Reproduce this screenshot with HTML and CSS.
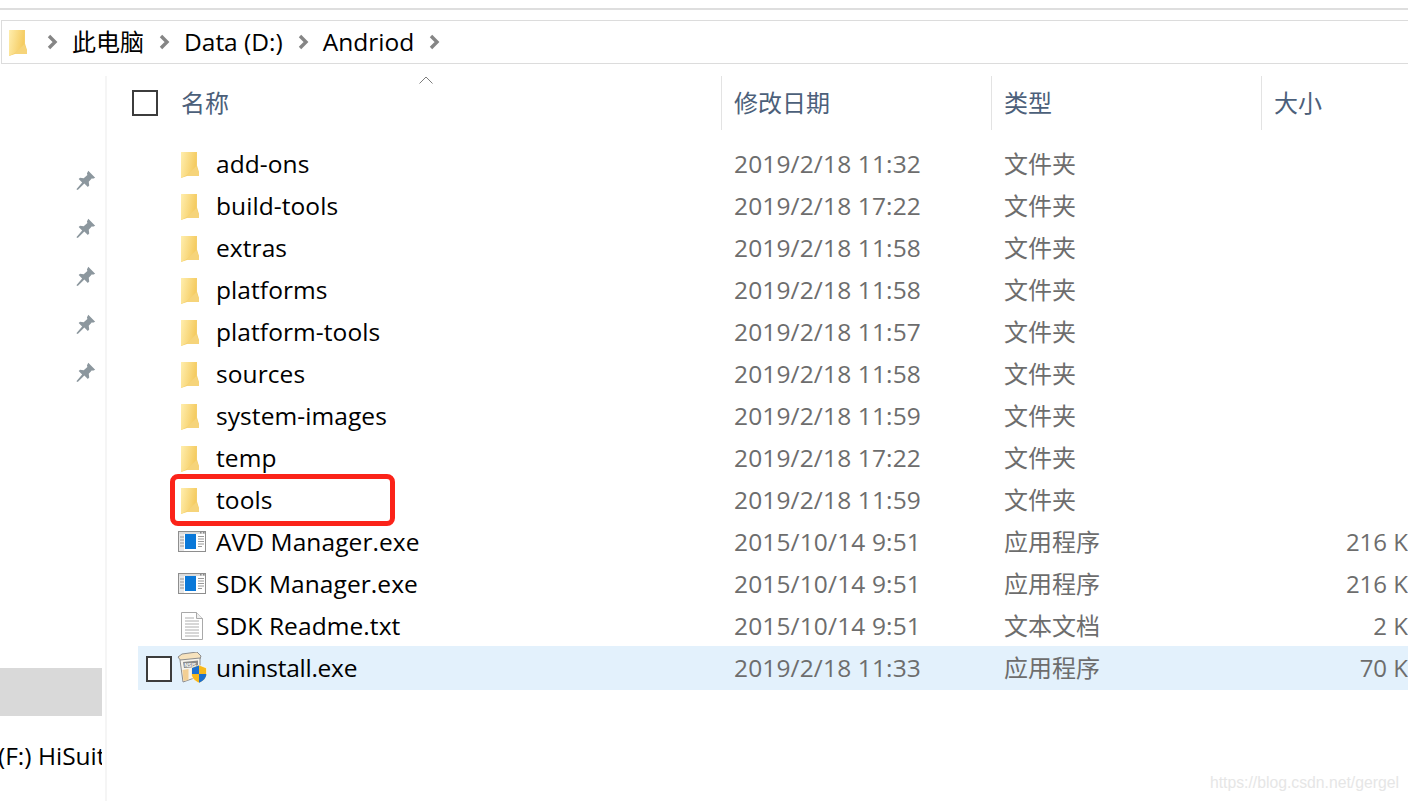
FILE: index.html
```html
<!DOCTYPE html>
<html lang="zh">
<head>
<meta charset="utf-8">
<title>Andriod</title>
<link rel="stylesheet" href="styles.css">
</head>
<body>
<svg class="defs" width="0" height="0" aria-hidden="true">
  <defs>
    <linearGradient id="fg" x1="0" x2="1" y1="0" y2="0.3">
      <stop offset="0" stop-color="#ffeeae"/><stop offset="1" stop-color="#f5cc62"/>
    </linearGradient>
    <symbol id="folder" viewBox="0 0 18 28" preserveAspectRatio="none">
      <path d="M0 1h16v14l2 7v4H6l-6 2z" fill="#f4cf6c"/>
      <path d="M0 1h15v15l-9 9-6 3z" fill="url(#fg)"/>
      <path d="M6 25l9-9 3 6v4H6z" fill="#f6d47a"/>
    </symbol>
    <symbol id="chev" viewBox="0 0 12 16">
      <path d="M3 2l6 6-6 6" fill="none" stroke="#858585" stroke-width="3.4"/>
    </symbol>
    <symbol id="pin" viewBox="0 0 24 24">
      <path d="M14.500 2l7.500 7.500-2.500 1-1-.5-3.500 4 .5 4-1.500 1.500-3.800-3.800L3 23l-1.500-1 6.300-7.300L4 11l1.500-1.500 4 .5 4-3.500-.5-1.500z" fill="#8c979e"/>
    </symbol>
    <symbol id="app" viewBox="0 0 28 21">
      <rect x=".5" y=".5" width="27" height="20" fill="#e8e8e8" stroke="#8e8e8e"/>
      <rect x="1" y="1" width="26" height="2" fill="#dcdcdc"/>
      <rect x="22" y="1" width="1.500" height="1.500" fill="#888"/><rect x="25" y="1" width="1.500" height="1.500" fill="#888"/>
      <rect x="6" y="3" width="21" height="17" fill="#fff"/>
      <rect x="7" y="3" width="11" height="15" fill="#0a78d8"/>
      <path d="M2 6h4M2 9h4M2 12h4M2 15h4M20 5.500h6M20 8h6M20 10.500h6M20 13h6M20 15.500h4" stroke="#9a9a9a"/>
    </symbol>
    <symbol id="doc" viewBox="0 0 22 28">
      <path d="M.5.500h15l6 6v21H.500z" fill="#fff" stroke="#a9a9a9"/>
      <path d="M15.500.500v6h6" fill="#eee" stroke="#a9a9a9"/>
      <path d="M4 6h9M4 9h14M4 12h14M4 15h14M4 18h14M4 21h14M4 24h14" stroke="#aeaeae"/>
    </symbol>
    <symbol id="nsis" viewBox="0 0 30 31">
      <path d="M1 5l4-3 15-2 4 4-1 3L4 9z" fill="#f6e2bd" stroke="#8d8d8d"/>
      <path d="M3 8l20-2v18L6 30z" fill="#f6f3ec" stroke="#8d8d8d"/>
      <path d="M6 10l15-1.500v6.500L7 16z" fill="#8b8b8b"/>
      <text x="7.500" y="14.500" class="nsis-label">NSIS</text>
      <path d="M5.500 18l6-1v11l-5 1z" fill="#f3cf94"/>
      <path d="M22 13l7.500 3v6c0 4-3 7-7.500 9-4.500-2-7.500-5-7.500-9v-6z" fill="#f6b81c" stroke="#fff" stroke-width=".6"/>
      <path d="M22 13.500v8.500h-7v-6zM22 22h7.300c0 4-3 7-7.300 8.700z" fill="#1a6fd0"/>
    </symbol>
  </defs>
</svg>

<div class="page">
  <div class="topline"></div>
  <nav class="address">
    <svg class="addr-folder"><use href="#folder"/></svg>
    <svg class="chev first"><use href="#chev"/></svg>
    <span class="crumb crumb-cn">此电脑</span>
    <svg class="chev"><use href="#chev"/></svg>
    <span class="crumb">Data (D:)</span>
    <svg class="chev"><use href="#chev"/></svg>
    <span class="crumb">Andriod</span>
    <svg class="chev"><use href="#chev"/></svg>
  </nav>

  <div class="body">
    <aside class="side">
      <div class="pins">
        <svg class="pin"><use href="#pin"/></svg>
        <svg class="pin"><use href="#pin"/></svg>
        <svg class="pin"><use href="#pin"/></svg>
        <svg class="pin"><use href="#pin"/></svg>
        <svg class="pin"><use href="#pin"/></svg>
      </div>
      <div class="side-active"></div>
      <div class="side-drive">(F:) HiSuite</div>
    </aside>

    <main class="main">
      <div class="header">
        <div class="h-name">
          <span class="check"></span>
          <span class="h-label">名称</span>
          <svg class="sort" viewBox="0 0 14 8"><path d="M.5 7.500L7 1l6.500 6.500" fill="none" stroke="#7d7d7d"/></svg>
        </div>
        <div class="h-col"><span class="h-label-col">修改日期</span></div>
        <div class="h-col"><span class="h-label-col">类型</span></div>
        <div class="h-col"><span class="h-label-col">大小</span></div>
      </div>

      <div class="rows">
        <div class="row"><div class="c-name"><svg class="ic-folder"><use href="#folder"/></svg><span class="name">add-ons</span></div><div class="c-date">2019/2/18 11:32</div><div class="c-type">文件夹</div><div class="c-size"></div></div>
        <div class="row"><div class="c-name"><svg class="ic-folder"><use href="#folder"/></svg><span class="name">build-tools</span></div><div class="c-date">2019/2/18 17:22</div><div class="c-type">文件夹</div><div class="c-size"></div></div>
        <div class="row"><div class="c-name"><svg class="ic-folder"><use href="#folder"/></svg><span class="name">extras</span></div><div class="c-date">2019/2/18 11:58</div><div class="c-type">文件夹</div><div class="c-size"></div></div>
        <div class="row"><div class="c-name"><svg class="ic-folder"><use href="#folder"/></svg><span class="name">platforms</span></div><div class="c-date">2019/2/18 11:58</div><div class="c-type">文件夹</div><div class="c-size"></div></div>
        <div class="row"><div class="c-name"><svg class="ic-folder"><use href="#folder"/></svg><span class="name">platform-tools</span></div><div class="c-date">2019/2/18 11:57</div><div class="c-type">文件夹</div><div class="c-size"></div></div>
        <div class="row"><div class="c-name"><svg class="ic-folder"><use href="#folder"/></svg><span class="name">sources</span></div><div class="c-date">2019/2/18 11:58</div><div class="c-type">文件夹</div><div class="c-size"></div></div>
        <div class="row"><div class="c-name"><svg class="ic-folder"><use href="#folder"/></svg><span class="name">system-images</span></div><div class="c-date">2019/2/18 11:59</div><div class="c-type">文件夹</div><div class="c-size"></div></div>
        <div class="row"><div class="c-name"><svg class="ic-folder"><use href="#folder"/></svg><span class="name">temp</span></div><div class="c-date">2019/2/18 17:22</div><div class="c-type">文件夹</div><div class="c-size"></div></div>
        <div class="row"><div class="c-name"><svg class="ic-folder"><use href="#folder"/></svg><span class="name">tools</span><span class="callout"></span></div><div class="c-date">2019/2/18 11:59</div><div class="c-type">文件夹</div><div class="c-size"></div></div>
        <div class="row"><div class="c-name"><svg class="ic-app"><use href="#app"/></svg><span class="name">AVD Manager.exe</span></div><div class="c-date">2015/10/14 9:51</div><div class="c-type">应用程序</div><div class="c-size">216 K</div></div>
        <div class="row"><div class="c-name"><svg class="ic-app"><use href="#app"/></svg><span class="name">SDK Manager.exe</span></div><div class="c-date">2015/10/14 9:51</div><div class="c-type">应用程序</div><div class="c-size">216 K</div></div>
        <div class="row"><div class="c-name"><svg class="ic-doc"><use href="#doc"/></svg><span class="name">SDK Readme.txt</span></div><div class="c-date">2015/10/14 9:51</div><div class="c-type">文本文档</div><div class="c-size">2 K</div></div>
        <div class="row selected"><div class="c-name"><span class="check row-check"></span><svg class="ic-nsis"><use href="#nsis"/></svg><span class="name name-tight">uninstall.exe</span></div><div class="c-date">2019/2/18 11:33</div><div class="c-type">应用程序</div><div class="c-size">70 K</div></div>
      </div>
    </main>
  </div>
  <div class="watermark">https://blog.csdn.net/gergel</div>
</div>
</body>
</html>
```
FILE: styles.css
```css
* { box-sizing: border-box; }
html, body { margin: 0; padding: 0; background: #fff; }
body {
  width: 1408px;
  height: 801px;
  overflow: hidden;
  font-family: "Open Sans", "Noto Sans CJK SC", sans-serif;
  font-size: 24px;
  color: #000;
}
.defs { position: absolute; }
.page {
  position: relative;
  width: 1408px;
  height: 801px;
  padding-top: 8px;
  overflow: hidden;
}
.topline { height: 2px; background: #dedede; }

.address {
  display: flex;
  align-items: center;
  height: 44px;
  margin: 10px 0 0 1px;
  padding-left: 7px;
  border: 1px solid #dcdcdc;
  border-right: 0;
}
.addr-folder { width: 18px; height: 27px; flex: none; }
.chev { width: 12px; height: 16px; margin: 0 14px; flex: none; }
.chev.first { margin-left: 19px; }
.crumb { line-height: 42px; font-size: 24.5px; }
.crumb-cn { font-size: 24px; }

.body {
  display: flex;
  margin-top: 12px;
  height: 725px;
}
.side {
  width: 107px;
  border-right: 2px solid #f5f5f5;
  display: flex;
  flex-direction: column;
  flex: none;
}
.pins {
  display: flex;
  flex-direction: column;
  align-items: flex-end;
  gap: 26px;
  padding: 93px 8px 0 0;
  height: 592px;
}
.pin { width: 22px; height: 22px; flex: none; }
.side-active { width: 102px; height: 48px; background: #d9d9d9; flex: none; }
.side-drive {
  width: 102px;
  margin-top: 20px;
  font-size: 24.5px;
  line-height: 40px;
  white-space: nowrap;
  overflow: hidden;
  text-indent: -2px;
}

.main { flex: 1; min-width: 0; }
.header {
  display: grid;
  grid-template-columns: 614px 270px 270px 147px;
  height: 54px;
  color: #4c607a;
}
.h-name {
  position: relative;
  display: flex;
  align-items: center;
  padding-left: 25px;
}
.check {
  display: block;
  width: 26px;
  height: 26px;
  border: 2px solid #3c3c3c;
  background: #fff;
  flex: none;
}
.h-label { margin-left: 23px; padding-bottom: 4px; }
.h-label-col { padding-bottom: 4px; }
.sort { position: absolute; left: 312px; top: 0; width: 14px; height: 8px; }
.h-col {
  display: flex;
  align-items: center;
  border-left: 1px solid #e3e3e3;
  padding-left: 12px;
}

.rows { margin-top: 13px; padding-left: 31px; }
.row {
  display: grid;
  grid-template-columns: 583px 270px 270px 147px;
  height: 42px;
  align-items: center;
  color: #6d6d6d;
}
.row.selected { height: 44px; margin-top: -1px; background: #e3f1fc; }
.c-name {
  position: relative;
  display: flex;
  align-items: center;
  height: 100%;
  padding-left: 40px;
  color: #000;
}
.c-date {
  padding-left: 13px;
  padding-bottom: 2px;
  font-size: 24.5px;
  letter-spacing: 0.14px;
  white-space: nowrap;
}
.c-type { padding-left: 13px; padding-bottom: 4px; }
.c-size { padding-bottom: 2px; white-space: nowrap; text-align: right; }
.name {
  margin-left: 9px;
  padding-bottom: 2px;
  font-size: 24.5px;
  letter-spacing: 0.08px;
  white-space: nowrap;
}
.name-tight { letter-spacing: -0.25px; }
.ic-folder { width: 18px; height: 27px; margin-left: 3px; margin-right: 15px; flex: none; }
.ic-folder + .name { margin-left: 2px; }
.ic-app { width: 28px; height: 21px; margin-right: 1px; margin-bottom: 2px; flex: none; }
.ic-doc { width: 22px; height: 28px; margin-left: 3px; margin-right: 4px; flex: none; }
.ic-nsis { width: 30px; height: 31px; margin-left: -1px; margin-bottom: 2px; flex: none; }
.nsis-label { font-family: "Liberation Sans", sans-serif; font-size: 5px; font-weight: 700; fill: #fff; }
.row-check { position: absolute; left: 8px; top: 10px; }
.callout {
  position: absolute;
  left: 32px;
  top: -5px;
  width: 225px;
  height: 52px;
  border: 5px solid #fb2319;
  border-radius: 8px;
}
.watermark {
  position: absolute;
  right: 9px;
  top: 773px;
  font-family: "Liberation Sans", sans-serif;
  font-size: 15.75px;
  line-height: 20px;
  color: #e6e6e6;
}
```
